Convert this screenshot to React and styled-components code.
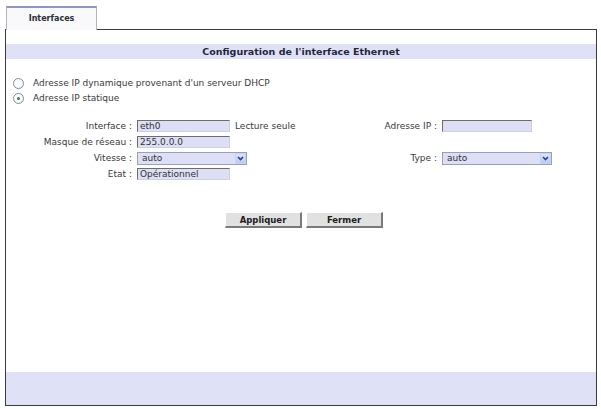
import React from 'react';
import styled, {createGlobalStyle} from 'styled-components';

const GlobalStyle = createGlobalStyle`
  html, body {
    margin: 0;
    padding: 0;
    background: #ffffff;
  }
  body {
    font-family: "DejaVu Sans", Verdana, sans-serif;
    font-size: 9px;
    color: #3a3a3a;
  }
`;

const Page = styled.div`
  width: 601px;
  height: 409px;
  box-sizing: border-box;
  padding: 6px 4px 3px 5px;
  display: flex;
  flex-direction: column;
`;

const TabBar = styled.div`
  display: flex;
  padding-left: 1px;
  position: relative;
  z-index: 1;
  margin-bottom: -1px;
`;

const Tab = styled.div`
  width: 91px;
  height: 24px;
  box-sizing: border-box;
  border: 1px solid #b4b4bc;
  border-top: 2px solid #8e94c6;
  border-bottom: none;
  background: #f9f9fb;
  display: flex;
  align-items: center;
  justify-content: center;
  font-size: 8px;
  font-weight: bold;
  color: #2c2c34;
  padding-bottom: 2px;
`;

const Panel = styled.div`
  flex: 1;
  border: 1px solid #3c3c3c;
  display: flex;
  flex-direction: column;
  padding-top: 14px;
`;

const TitleBar = styled.div`
  height: 15px;
  background: #dfe2f7;
  display: flex;
  align-items: center;
  justify-content: center;
  font-size: 9.5px;
  font-weight: bold;
  color: #25253a;
`;

const RadioGroup = styled.div`
  display: flex;
  flex-direction: column;
  gap: 5px;
  padding: 19px 0 0 7px;
`;

const RadioRow = styled.label`
  display: flex;
  align-items: center;
  gap: 9px;
  height: 10px;
`;

const RadioDot = styled.span`
  width: 9px;
  height: 9px;
  border-radius: 50%;
  border: 1px solid #7d8ea0;
  background: radial-gradient(circle at 40% 40%, #ffffff 40%, #e4e6ee 100%);
  display: flex;
  align-items: center;
  justify-content: center;
  &::after {
    content: '';
    width: 3px;
    height: 3px;
    border-radius: 50%;
    background: ${p => (p.$checked ? '#2f8a2f' : 'transparent')};
  }
`;

const FieldGrid = styled.div`
  display: grid;
  grid-template-columns: 126px 190px 105px 1fr;
  column-gap: 5px;
  grid-auto-rows: 16px;
  margin-top: 15px;
`;

const Label = styled.div`
  text-align: right;
  white-space: nowrap;
  align-self: center;
`;

const FieldCell = styled.div`
  display: flex;
  align-items: center;
  gap: 5px;
  white-space: nowrap;
`;

const TextBox = styled.div`
  width: ${p => p.$w || 93}px;
  height: 12px;
  box-sizing: border-box;
  background: #dcdff6;
  border-top: 1px solid #6c6c6c;
  border-left: 1px solid #6c6c6c;
  border-right: 1px solid #d0d0d8;
  border-bottom: 1px solid #d0d0d8;
  padding-left: 2px;
  line-height: 10px;
  color: #333;
`;

const SelectBox = styled.div`
  width: 110px;
  height: 13px;
  box-sizing: border-box;
  background: #dcdff6;
  border: 1px solid #9aa0b8;
  display: flex;
  align-items: center;
  justify-content: space-between;
  padding-left: 4px;
  color: #333;
`;

const SelectArrow = styled.span`
  width: 11px;
  height: 11px;
  box-sizing: border-box;
  background: linear-gradient(#dbe4fb, #b9c9f1);
  border: 1px solid #c6d2f2;
  border-radius: 1px;
  display: flex;
  align-items: center;
  justify-content: center;
`;

const ButtonRow = styled.div`
  display: flex;
  justify-content: center;
  gap: 4px;
  margin-top: 30px;
  padding-left: 6px;
`;

const Button = styled.button`
  width: 77px;
  height: 16px;
  box-sizing: border-box;
  padding: 0;
  background: #e1e1e1;
  border-top: 1px solid #ffffff;
  border-left: 1px solid #ffffff;
  border-right: 2px solid #7a7a7a;
  border-bottom: 2px solid #7a7a7a;
  font-family: "DejaVu Sans", Verdana, sans-serif;
  font-size: 8.5px;
  font-weight: bold;
  color: #1c1c1c;
`;

const Footer = styled.div`
  margin-top: auto;
  height: 33px;
  background: #dfe2f7;
`;

const Chevron = () => (
  <svg width="7" height="5" viewBox="0 0 7 5">
    <path d="M1 1 L3.5 3.5 L6 1" fill="none" stroke="#2b3f8f" strokeWidth="1.6" />
  </svg>
);

export default function App() {
  return (
    <Page>
      <GlobalStyle />
      <TabBar>
        <Tab>Interfaces</Tab>
      </TabBar>
      <Panel>
        <TitleBar>Configuration de l'interface Ethernet</TitleBar>
        <RadioGroup>
          <RadioRow>
            <RadioDot />
            Adresse IP dynamique provenant d'un serveur DHCP
          </RadioRow>
          <RadioRow>
            <RadioDot $checked />
            Adresse IP statique
          </RadioRow>
        </RadioGroup>
        <FieldGrid>
          <Label>Interface :</Label>
          <FieldCell>
            <TextBox>eth0</TextBox>
            Lecture seule
          </FieldCell>
          <Label>Adresse IP :</Label>
          <FieldCell>
            <TextBox $w={90} />
          </FieldCell>

          <Label>Masque de réseau :</Label>
          <FieldCell>
            <TextBox>255.0.0.0</TextBox>
          </FieldCell>
          <div />
          <div />

          <Label>Vitesse :</Label>
          <FieldCell>
            <SelectBox>
              auto
              <SelectArrow><Chevron /></SelectArrow>
            </SelectBox>
          </FieldCell>
          <Label>Type :</Label>
          <FieldCell>
            <SelectBox>
              auto
              <SelectArrow><Chevron /></SelectArrow>
            </SelectBox>
          </FieldCell>

          <Label>Etat :</Label>
          <FieldCell>
            <TextBox>Opérationnel</TextBox>
          </FieldCell>
        </FieldGrid>
        <ButtonRow>
          <Button>Appliquer</Button>
          <Button>Fermer</Button>
        </ButtonRow>
        <Footer />
      </Panel>
    </Page>
  );
}
